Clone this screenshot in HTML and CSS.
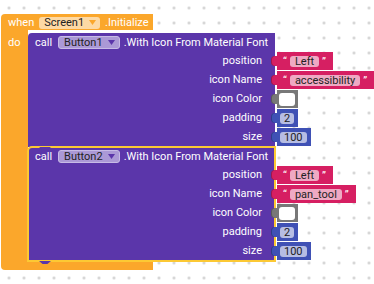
FILE: index.html
```html
<!DOCTYPE html>
<html lang="en">
<head>
    <meta charset="UTF-8">
    <meta name="viewport" content="width=device-width, initial-scale=1.0">
    <title>Screen1.Initialize</title>
    <link rel="stylesheet" href="styles.css">
</head>
<body>
    <div class="workspace">
        <div class="event">
            <div class="event-head">
                <span>when</span>
                <span class="dropdown screen">Screen1
                    <svg class="arrow" width="7" height="5" viewBox="0 0 7 5"><polygon points="0,0 7,0 3.5,5"/></svg>
                </span>
                <span>.Initialize</span>
            </div>
            <div class="event-body">
                <div class="event-arm">do</div>
                <div class="stack">

                    <!-- first call -->
                    <div class="call">
                        <div class="call-body">
                            <div class="call-head">
                                <span>call</span>
                                <span class="dropdown comp">Button1
                                    <svg class="arrow" width="7" height="5" viewBox="0 0 7 5"><polygon points="0,0 7,0 3.5,5"/></svg>
                                </span>
                                <span>.With Icon From Material Font</span>
                            </div>
                            <div class="arg">position</div>
                            <div class="arg">icon Name</div>
                            <div class="arg">icon Color</div>
                            <div class="arg">padding</div>
                            <div class="arg">size</div>
                        </div>
                        <div class="inputs">
                            <div class="val text"><span>&ldquo;</span><span class="field">Left</span><span>&rdquo;</span></div>
                            <div class="val text"><span>&ldquo;</span><span class="field">accessibility</span><span>&rdquo;</span></div>
                            <div class="val colour"><span class="swatch"></span></div>
                            <div class="val num"><span class="field">2</span></div>
                            <div class="val num"><span class="field">100</span></div>
                        </div>
                    </div>

                    <!-- second call (selected) -->
                    <div class="call">
                        <div class="call-body selected">
                            <div class="call-head">
                                <span>call</span>
                                <span class="dropdown comp">Button2
                                    <svg class="arrow" width="7" height="5" viewBox="0 0 7 5"><polygon points="0,0 7,0 3.5,5"/></svg>
                                </span>
                                <span>.With Icon From Material Font</span>
                            </div>
                            <div class="arg">position</div>
                            <div class="arg">icon Name</div>
                            <div class="arg">icon Color</div>
                            <div class="arg">padding</div>
                            <div class="arg">size</div>
                        </div>
                        <div class="inputs">
                            <div class="val text"><span>&ldquo;</span><span class="field">Left</span><span>&rdquo;</span></div>
                            <div class="val text"><span>&ldquo;</span><span class="field">pan_tool</span><span>&rdquo;</span></div>
                            <div class="val colour"><span class="swatch"></span></div>
                            <div class="val num"><span class="field">2</span></div>
                            <div class="val num"><span class="field">100</span></div>
                        </div>
                    </div>

                </div>
            </div>
            <div class="event-foot"></div>
        </div>
    </div>
</body>
</html>
```
FILE: styles.css
```css
html, body {
    margin: 0;
    padding: 0;
    width: 374px;
    height: 284px;
    overflow: hidden;
}
body {
    background-color: #fff;
    background-image: radial-gradient(circle, #cfcfcf 1px, transparent 1.6px);
    background-size: 15px 15px;
    background-position: 1.5px 0.5px;
    font-family: Roboto, "Liberation Sans", sans-serif;
    font-size: 11px;
    color: #fff;
}
.workspace {
    padding: 14px 0 0 1px;
}
.event {
    display: inline-flex;
    flex-direction: column;
    align-items: flex-start;
}
.event-head {
    width: 152px;
    height: 16px;
    box-sizing: border-box;
    padding-left: 7px;
    display: flex;
    align-items: center;
    gap: 5px;
    background-color: #fba72b;
    border-radius: 4px 0 0 0;
}
.event-body {
    display: flex;
}
.event-arm {
    width: 27px;
    box-sizing: border-box;
    padding: 6px 0 0 7px;
    line-height: 13px;
    background-color: #fba72b;
}
.stack {
    padding-top: 3px;
}
.event-foot {
    width: 152px;
    height: 9px;
    background-color: #fba72b;
    border-radius: 0 0 0 4px;
}

/* dropdown fields */
.dropdown {
    display: inline-flex;
    align-items: center;
    gap: 5px;
    height: 11px;
    line-height: 11px;
    padding: 0 4px 0 5px;
    border-radius: 3px;
    color: #222;
}
.dropdown.screen {
    background-color: #fdd9a4;
    height: 12px;
    margin-top: 1px;
}
.dropdown.screen .arrow {
    fill: #fba72b;
}
.dropdown.comp {
    background-color: #ab99d6;
    border: 1px solid #c7bbe6;
}
.dropdown.comp .arrow {
    fill: #5b36aa;
}

/* procedure call blocks */
.call {
    display: flex;
    align-items: flex-start;
}
.call-body {
    position: relative;
    width: 247px;
    background-color: #5b36aa;
    border-radius: 4px 0 0 0;
}
.call-body::after {
    content: "";
    position: absolute;
    left: 11px;
    bottom: -3px;
    width: 12px;
    height: 3px;
    background-color: #5b36aa;
    clip-path: polygon(0 0, 100% 0, 70% 100%, 30% 100%);
    z-index: 2;
}
.call-body.selected {
    outline: 2px solid #fcc934;
    outline-offset: -1px;
    z-index: 1;
}
.call-head {
    height: 19px;
    padding-left: 7px;
    display: flex;
    align-items: center;
    gap: 6px;
}
.call-head span:last-child {
    margin-left: -2px;
}
.arg {
    height: 19px;
    line-height: 17px;
    padding-right: 13px;
    text-align: right;
}
.inputs {
    padding-top: 19px;
    display: flex;
    flex-direction: column;
    align-items: flex-start;
}

/* value blocks */
.val {
    position: relative;
    height: 18px;
    margin: 0 0 1px 2px;
    display: inline-flex;
    align-items: center;
    box-sizing: border-box;
    z-index: 2;
}
.val::before {
    content: "";
    position: absolute;
    left: -6px;
    top: 4px;
    width: 7px;
    height: 10px;
    border-radius: 4px 0 0 4px;
    background-color: inherit;
    box-shadow: inset 1px 0 0 rgba(0, 0, 0, 0.25);
}
.field {
    display: inline-block;
    height: 11px;
    line-height: 11px;
    padding: 0 5px;
    border-radius: 3px;
    color: #222;
    background-color: rgba(255, 255, 255, 0.62);
}
.val.text {
    background-color: #d61f62;
    padding: 0 7px 0 6px;
    gap: 3px;
}
.val.colour {
    background-color: #787878;
    width: 21px;
    padding-left: 2px;
}
.swatch {
    width: 16px;
    height: 13px;
    border-radius: 3px;
    background-color: #fff;
}
.val.num {
    background-color: #3f51b5;
    padding: 0 4px 0 3px;
}
.val.num .field {
    padding: 0 4px;
}
```
